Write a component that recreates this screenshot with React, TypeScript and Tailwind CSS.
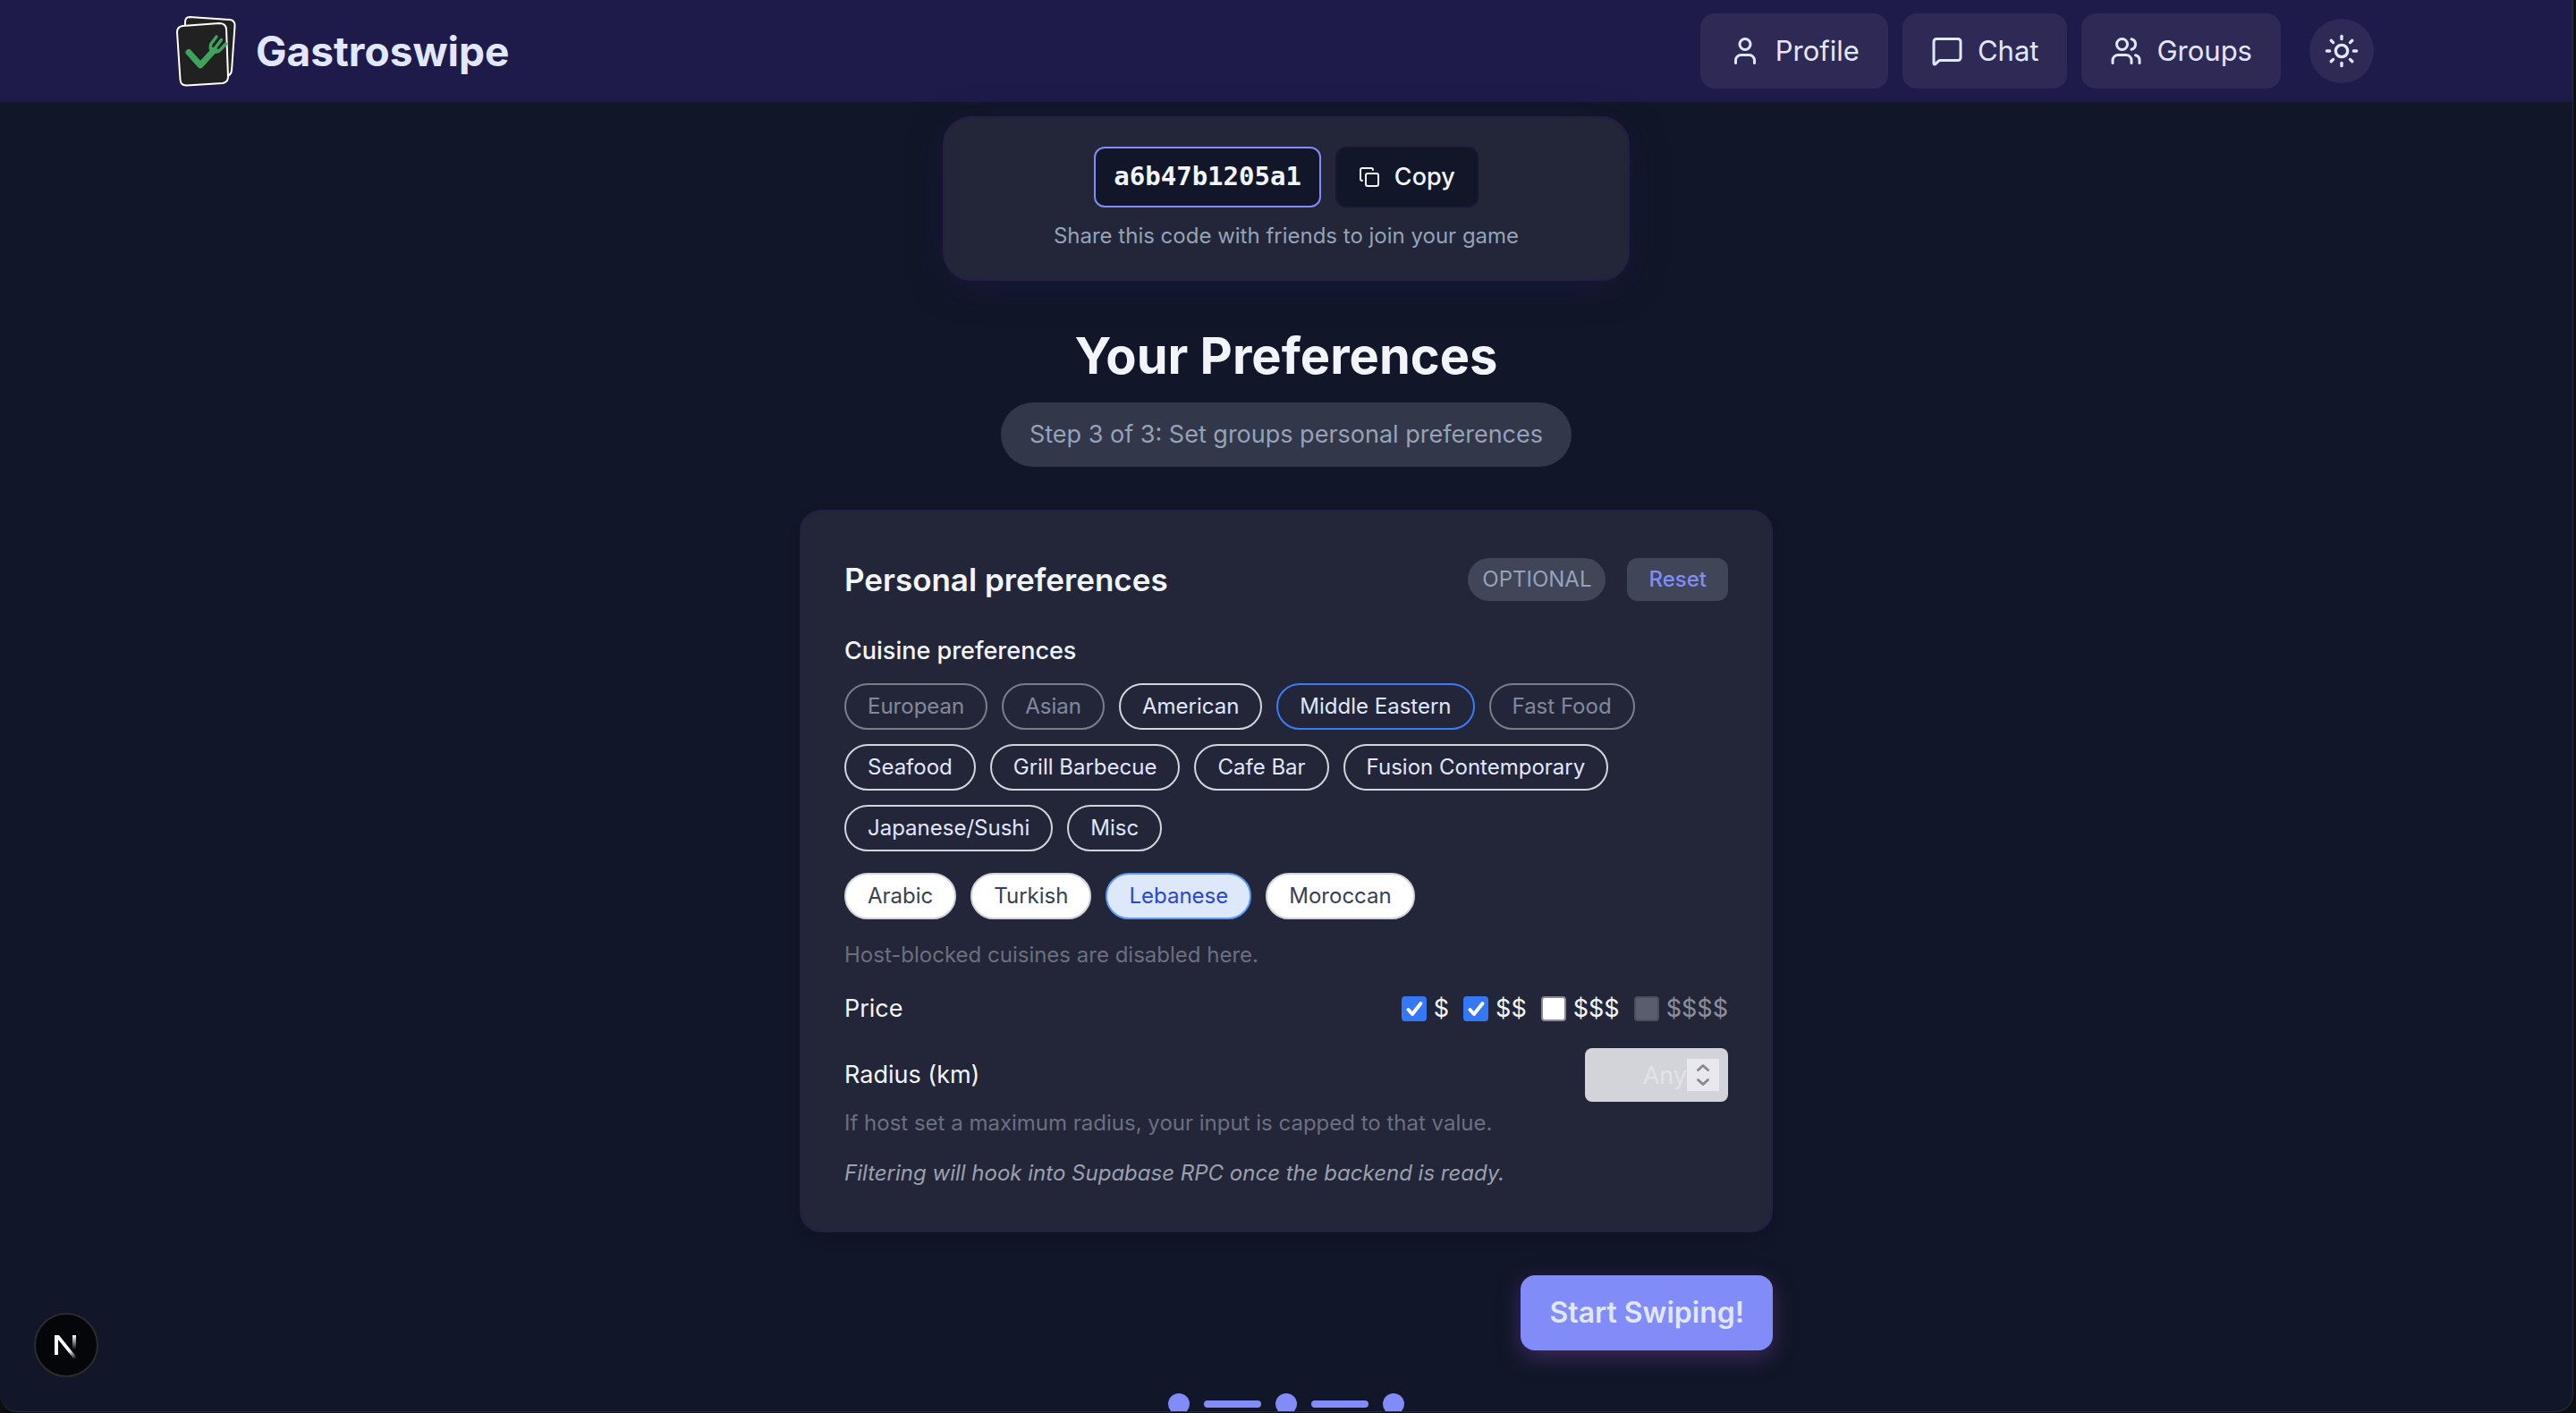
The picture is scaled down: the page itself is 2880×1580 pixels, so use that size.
import React from "react";
import { Copy, MessageSquare, Sun, User, Users } from "lucide-react";

const navItems = [
  { label: "Profile", Icon: User },
  { label: "Chat", Icon: MessageSquare },
  { label: "Groups", Icon: Users },
];

type Chip = { label: string; state: "blocked" | "open" | "active" };

const cuisines: Chip[] = [
  { label: "European", state: "blocked" },
  { label: "Asian", state: "blocked" },
  { label: "American", state: "open" },
  { label: "Middle Eastern", state: "active" },
  { label: "Fast Food", state: "blocked" },
  { label: "Seafood", state: "open" },
  { label: "Grill Barbecue", state: "open" },
  { label: "Cafe Bar", state: "open" },
  { label: "Fusion Contemporary", state: "open" },
  { label: "Japanese/Sushi", state: "open" },
  { label: "Misc", state: "open" },
];

const subCuisines = [
  { label: "Arabic", selected: false },
  { label: "Turkish", selected: false },
  { label: "Lebanese", selected: true },
  { label: "Moroccan", selected: false },
];

const prices = [
  { label: "$", checked: true, disabled: false },
  { label: "$$", checked: true, disabled: false },
  { label: "$$$", checked: false, disabled: false },
  { label: "$$$$", checked: false, disabled: true },
];

const chipStyles = {
  blocked: "border-[#d1d5dc] text-[#e0e7ff] opacity-50",
  open: "border-[#d1d5dc] text-[#e0e7ff]",
  active: "border-[#3b7cf6] text-[#e0e7ff]",
};

function Logo() {
  return (
    <svg viewBox="0 0 80 95" className="h-[95px] w-20" aria-hidden="true">
      <g stroke="#ffffff" strokeWidth="2" fill="#212121">
        <path d="M22 9 L67 12 Q73 13 72.500 19 L69 69 Q68 75 62 75 L22 74 Q16 73 16.500 66 L17 15 Q17 9 22 9Z" />
        <path d="M14 19 L55 16 Q62 16 63 22 L65 76 Q65 82 59 83 L19 85.500 Q12 86 11.500 79 L8 26 Q8 20 14 19Z" />
      </g>
      <g fill="none" stroke="#3fa45b" strokeLinecap="round" strokeLinejoin="round">
        <path d="M21 48.500 L34 63 L49 46.500" strokeWidth="7" />
        <path d="M52 31 L46 39 Q44 44 47 47 Q52 50 56 46 L62.500 39" strokeWidth="3.500" />
        <path d="M57.500 34.500 L51 43" strokeWidth="3.500" />
      </g>
      <path d="M44.500 42 L56.500 45.500 Q52 51 47 48Z" fill="#3fa45b" />
    </svg>
  );
}

function Header() {
  return (
    <header className="flex h-[114px] items-center justify-between bg-[#1e1b4b] pr-[222px] pl-[190px]">
      <a href="#home" className="flex items-center gap-4">
        <Logo />
        <span className="text-[46px] leading-none font-bold text-[#e0e7ff]">Gastroswipe</span>
      </a>
      <nav className="flex items-center gap-4">
        {navItems.map(({ label, Icon }) => (
          <a key={label} href={"#" + label.toLowerCase()} className="flex h-[84px] items-center gap-4 rounded-2xl bg-[#2e2a55] px-8 text-[31px] text-[#e0e7ff]">
            <Icon size={36} strokeWidth={2} />
            {label}
          </a>
        ))}
        <button type="button" aria-label="Toggle theme" className="ml-4 flex size-[72px] items-center justify-center rounded-full bg-[#2e2a55] text-[#e0e7ff]">
          <Sun size={40} strokeWidth={2} />
        </button>
      </nav>
    </header>
  );
}

function InviteCode() {
  return (
    <section className="flex w-3xl flex-col items-center rounded-[32px] border-2 border-[#231f45] bg-[#222638] py-8 shadow-[0_8px_40px_#1e1b4b66]">
      <div className="flex gap-4">
        <code className="flex h-[68px] items-center rounded-xl border-2 border-[#818cf8] bg-[#111628] px-5 font-['DejaVu_Sans_Mono',monospace] text-[29px] font-bold text-[#f1f5f9]">a6b47b1205a1</code>
        <button type="button" className="flex h-[68px] items-center gap-4 rounded-xl border-2 border-[#141833] bg-[#111628] px-6 text-[27px] font-medium text-[#f1f5f9]">
          <Copy size={24} strokeWidth={2} />
          Copy
        </button>
      </div>
      <p className="mt-4 text-2xl text-[#94a3b8]">Share this code with friends to join your game</p>
    </section>
  );
}

function PriceRow() {
  return (
    <fieldset className="mt-6 flex h-10 items-center justify-between text-[27px]">
      <span>Price</span>
      <div className="flex gap-4">
        {prices.map((p) => (
          <label key={p.label} className={p.disabled ? "flex items-center gap-2 opacity-50" : "flex items-center gap-2"}>
            <span className="relative flex size-7">
              <input
                type="checkbox"
                defaultChecked={p.checked}
                disabled={p.disabled}
                className="peer size-7 appearance-none rounded-sm border-2 border-[#8b8994] bg-white checked:border-[#3478f6] checked:bg-[#3478f6] disabled:border-[#727480] disabled:bg-[#9296a0]"
              />
              <svg viewBox="0 0 28 28" className="pointer-events-none absolute inset-0 hidden size-7 peer-checked:block" aria-hidden="true">
                <path d="M7.500 15 L12 20 L21.500 8" fill="none" stroke="#ffffff" strokeWidth="4" strokeLinecap="round" strokeLinejoin="round" />
              </svg>
            </span>
            {p.label}
          </label>
        ))}
      </div>
    </fieldset>
  );
}

function RadiusRow() {
  return (
    <div className="mt-6 flex items-center justify-between text-[27px]">
      <label htmlFor="radius">Radius (km)</label>
      <div className="relative">
        <input id="radius" type="text" inputMode="numeric" placeholder="Any" className="block h-[60px] w-40 rounded-lg bg-[#d3d4d9] pr-[46px] text-right text-[#364153] placeholder:text-[#e2e3e8]" />
        <button type="button" tabIndex={-1} aria-label="Change radius" className="absolute top-3 right-[10px] size-9 bg-[#e8e8ee] text-[#8b8994]">
          <svg viewBox="0 0 36 36" className="size-9" fill="none" stroke="currentColor" strokeWidth="3" strokeLinecap="round" strokeLinejoin="round" aria-hidden="true">
            <path d="M12.500 12.500 L18 7.500 L23.500 12.500" />
            <path d="M12.500 23.500 L18 28.500 L23.500 23.500" />
          </svg>
        </button>
      </div>
    </div>
  );
}

function PreferencesCard() {
  return (
    <section className="mt-12 w-[1088px] rounded-3xl border-2 border-[#231f45] bg-[#222638] px-12 pt-[52px] pb-12 text-[#f1f5f9] shadow-[0_8px_16px_#0000001a]">
      <div className="flex items-center justify-between">
        <h2 className="text-[35px] leading-none font-semibold">Personal preferences</h2>
        <div className="flex gap-6">
          <span className="flex h-12 items-center rounded-full bg-[#404558] px-4 text-2xl text-[#94a3b8]">OPTIONAL</span>
          <button type="button" className="h-12 rounded-xl bg-[#404558] px-6 text-2xl font-medium text-[#818cf8]">Reset</button>
        </div>
      </div>
      <h3 className="mt-9 text-[27px] leading-10 font-medium">Cuisine preferences</h3>
      <div className="mt-4 flex flex-wrap gap-4">
        {cuisines.map((c) => (
          <button key={c.label} type="button" disabled={c.state === "blocked"} className={"h-[52px] rounded-full border-2 px-6 text-2xl " + chipStyles[c.state]}>
            {c.label}
          </button>
        ))}
      </div>
      <div className="mt-6 flex flex-wrap gap-4">
        {subCuisines.map((c) => (
          <button
            key={c.label}
            type="button"
            className={c.selected ? "h-[52px] rounded-full border-2 border-[#5e9bf8] bg-[#dde8fb] px-6 text-2xl text-[#2547dd]" : "h-[52px] rounded-full border-2 border-[#d1d5dc] bg-white px-6 text-2xl text-[#364153]"}
          >
            {c.label}
          </button>
        ))}
      </div>
      <p className="mt-6 text-2xl text-[#6a7080]">Host-blocked cuisines are disabled here.</p>
      <PriceRow />
      <RadiusRow />
      <p className="mt-2 text-2xl text-[#6a7080]">If host set a maximum radius, your input is capped to that value.</p>
      <p className="mt-6 text-2xl text-[#99a1af] italic">Filtering will hook into Supabase RPC once the backend is ready.</p>
    </section>
  );
}

function Steps() {
  return (
    <div className="mt-12 flex items-center gap-4" aria-hidden="true">
      <span className="size-6 rounded-full bg-[#818cf8]" />
      <span className="h-2 w-16 rounded-full bg-[#818cf8]" />
      <span className="size-6 rounded-full bg-[#818cf8]" />
      <span className="h-2 w-16 rounded-full bg-[#818cf8]" />
      <span className="size-6 rounded-full bg-[#818cf8]" />
    </div>
  );
}

export default function App() {
  return (
    <div className="h-screen overflow-hidden bg-[#0b0f0f] pr-[3px] pb-px font-['Inter',sans-serif]">
      <div className="h-full overflow-hidden rounded-b-[20px] border-r border-b border-[#2a2d3c] bg-[#111628]">
        <Header />
        <main className="flex flex-col items-center pt-4">
          <InviteCode />
          <h1 className="mt-11 text-[56px] leading-[80px] font-bold text-[#f1f5f9]">Your Preferences</h1>
          <p className="mt-3 flex h-[72px] items-center rounded-full bg-[#32374a] px-8 text-[27px] text-[#94a3b8]">Step 3 of 3: Set groups personal preferences</p>
          <PreferencesCard />
          <div className="mt-12 flex w-[1088px] justify-end">
            <button type="button" className="h-[84px] rounded-2xl bg-[#818cf8] px-8 text-[32px] font-semibold text-[#e0e7ff] shadow-[0_8px_24px_#3b2a5a]">Start Swiping!</button>
          </div>
          <Steps />
        </main>
      </div>
      <button type="button" aria-label="Open developer tools" className="fixed bottom-10 left-[38px] flex size-[72px] items-center justify-center rounded-full border-2 border-[#2c2c2e] bg-[#050609]">
        <svg viewBox="0 -4 26 32" className="h-8 w-[26px]" aria-hidden="true">
          <defs>
            <linearGradient id="diag" x1="14" y1="14" x2="24" y2="27" gradientUnits="userSpaceOnUse">
              <stop offset="0.3" stopColor="#fff" />
              <stop offset="1" stopColor="#fff" stopOpacity="0" />
            </linearGradient>
            <linearGradient id="stem" x1="0" y1="1" x2="0" y2="17" gradientUnits="userSpaceOnUse">
              <stop stopColor="#fff" />
              <stop offset="1" stopColor="#fff" stopOpacity="0" />
            </linearGradient>
          </defs>
          <path d="M0 1H5L25 26L22 28L4 6V23H0Z" fill="url(#diag)" />
          <rect x="20" y="1" width="4" height="16" fill="url(#stem)" />
        </svg>
      </button>
    </div>
  );
}
